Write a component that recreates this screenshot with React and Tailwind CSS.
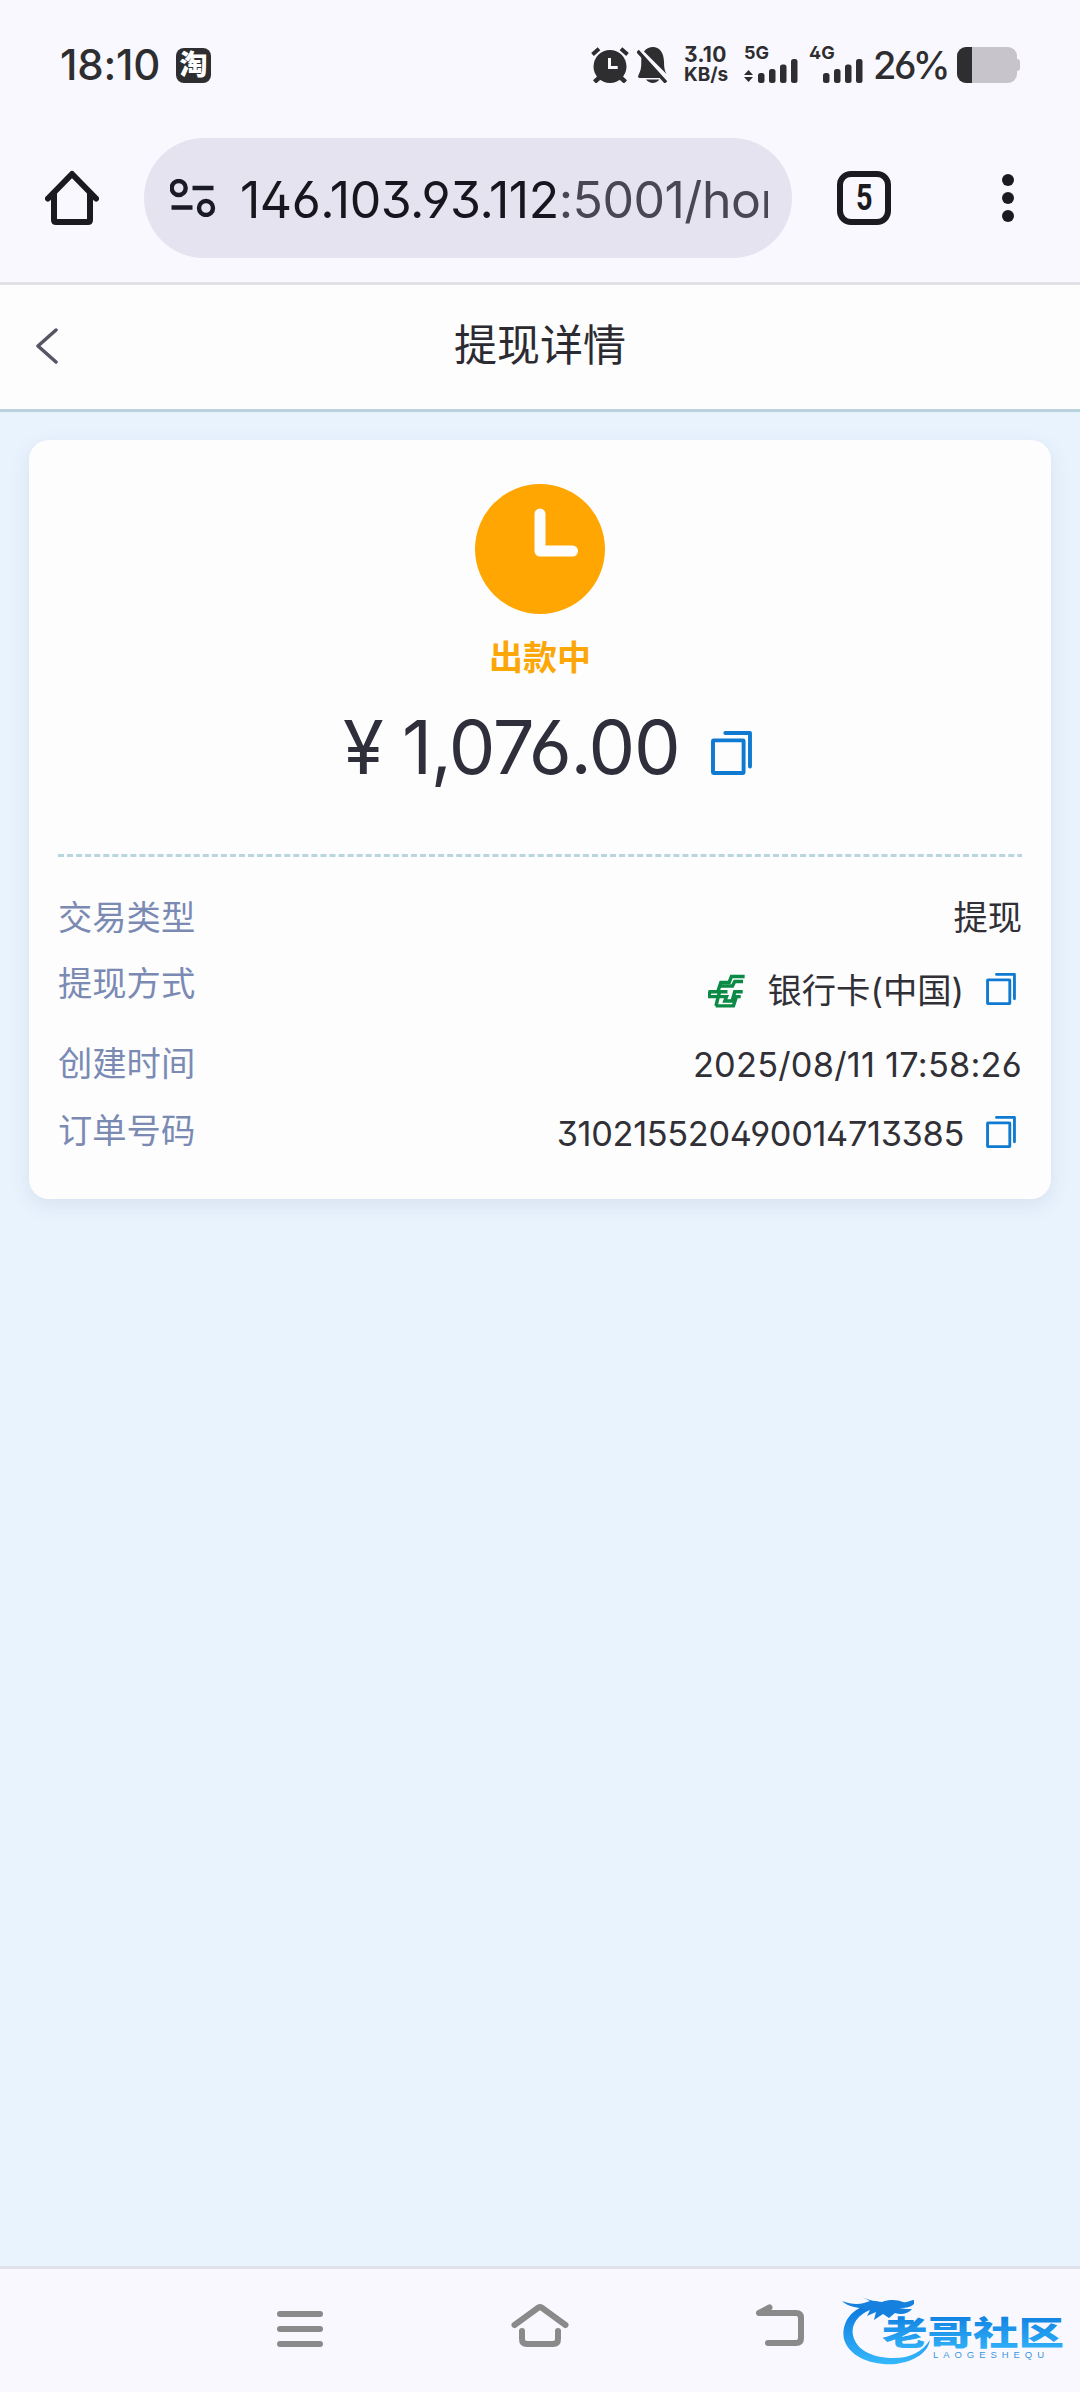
const fonts = "font-['Inter','Noto_Sans_CJK_SC',sans-serif] [font-feature-settings:'ss01']";

const SignalBars = () => (
  <svg className="block h-6 w-10" viewBox="0 0 40 24" fill="#2e2e30">
    <rect x="0" y="14" width="6.5" height="10" rx="2.5" />
    <rect x="11" y="10" width="6.5" height="14" rx="2.5" />
    <rect x="22" y="5.5" width="6.5" height="18.5" rx="2.5" />
    <rect x="33" y="0" width="6.5" height="24" rx="2.5" />
  </svg>
);

const AlarmIcon = () => (
  <svg className="h-9 w-[38px]" viewBox="0 0 38 36" fill="none">
    <path d="M1.5 7.5 8 1.8M36.5 7.5 30 1.8" stroke="#2e2e30" strokeWidth="4" />
    <path d="M9 30 3.5 35M29 30l5.5 5" stroke="#2e2e30" strokeWidth="4.5" />
    <circle cx="19" cy="19.5" r="16.5" fill="#2e2e30" />
    <path d="M18.5 11v9.5h8.2" stroke="#f9f8fe" strokeWidth="3" />
  </svg>
);

const BellOffIcon = () => (
  <svg className="h-9 w-8" viewBox="0 0 32 36" fill="#2e2e30">
    <path d="M16 0c-3 0-6.5 1-9 4.5L29.500 27c-2-3-2.500-7-2.500-12.500C26.800 5 22 0 16 0Z" />
    <path d="M4.500 9c-.6 7 .6 12-2.500 18-1.500 2.500-1.200 4 1 4h21.500Z" />
    <path d="M.5 4 29 35.500" stroke="#2e2e30" strokeWidth="3.4" />
    <path d="M9 32.500h13.500c-3.500 4.500-10 4.500-13.500 0Z" />
  </svg>
);

const CopyIcon = ({ className }) => (
  <svg className={className} viewBox="0 0 41 44" fill="none" stroke="#0e7ad1" strokeWidth="3.9" strokeLinejoin="round" strokeLinecap="round">
    <rect x="2" y="9.4" width="30.600" height="32.600" rx="0.5" />
    <path d="M14.300 2H39v33.500" />
  </svg>
);

const BankLogo = () => (
  <svg className="h-[35px] w-[37px]" viewBox="27 31 112 105" fill="none" stroke="#0b8a45" strokeWidth="10.500">
    <path d="M138 38H98l-7 18H66l-8 24" />
    <path d="M133 53H108l-7 14H66" />
    <path d="M86 84H33l-4 15h54l-5 13h22l8-28h24" />
    <path d="M126 99h-13l-9 28H50" />
    <path d="M62 84 51 127" />
  </svg>
);

const StatusBar = () => (
  <div className="flex h-[83px] items-end justify-between px-[60px] text-[#2e2e30]">
    <div className="flex h-9 items-center gap-4">
      <span className="w-[100px] whitespace-nowrap text-[42px] font-medium leading-9 tracking-[-0.2px]">18:10</span>
      <span className="flex size-[35px] items-center justify-center rounded-lg bg-[#2e2e30] text-[28px] font-black leading-none text-white">淘</span>
    </div>
    <div className="flex h-9 items-end">
      <AlarmIcon />
      <span className="ml-2 flex"><BellOffIcon /></span>
      <div className="ml-[15px] flex h-9 w-11 flex-col justify-between text-[21px] font-bold">
        <span className="h-4 leading-4 tracking-[0.3px]">3.10</span>
        <span className="h-4 text-[19px] leading-4">KB/s</span>
      </div>
      <div className="ml-4 flex h-9 w-[54px] flex-col">
        <span className="h-3 text-[18px] font-bold leading-3">5G</span>
        <div className="flex items-end justify-between">
          <svg className="mb-px h-3 w-[9px]" viewBox="0 0 9 12" fill="#2e2e30">
            <path d="M4.500 0 9 5H0ZM4.500 12 9 7H0Z" />
          </svg>
          <SignalBars />
        </div>
      </div>
      <div className="ml-[11px] flex h-9 w-[54px] flex-col">
        <span className="h-3 text-[18px] font-bold leading-3">4G</span>
        <div className="flex justify-end"><SignalBars /></div>
      </div>
      <span className="ml-[10px] w-[76px] whitespace-nowrap text-[38px] font-medium leading-9 tracking-[-2.4px]">26%</span>
      <div className="ml-2 flex h-9 items-center">
        <div className="h-9 w-[60px] overflow-hidden rounded-[9px] bg-[#c7c4cb]">
          <div className="h-full w-[15px] bg-[#2e2e30]" />
        </div>
        <div className="h-3 w-[3px] rounded-r-sm bg-[#c7c4cb]" />
      </div>
    </div>
  </div>
);

const BrowserBar = () => (
  <div className="mt-[55px] flex h-[120px] items-center">
    <svg className="ml-[45px] h-[56px] w-[54px] shrink-0" viewBox="0 0 54 56" fill="none" stroke="#1a1a20" strokeWidth="6" strokeLinecap="round" strokeLinejoin="round">
      <path d="M3 28.500 27 4l24 24.500" />
      <path d="M9 24v26q0 2 2 2h32q2 0 2-2V24" />
    </svg>
    <div className="ml-[45px] flex h-[120px] w-[648px] items-center rounded-full bg-[#e4e3ef]">
      <svg className="ml-[26px] h-[38px] w-[46px] shrink-0" viewBox="0 0 46 38" fill="none" stroke="#1a1a26" strokeWidth="4.4">
        <circle cx="8.700" cy="9" r="7" />
        <path d="M22.500 9h21M1.500 28.500h21" />
        <circle cx="36" cy="29" r="7" />
      </svg>
      <div className="ml-[24px] mt-[3px] w-[528px] overflow-hidden whitespace-nowrap text-[50px] leading-[68px] tracking-[-0.5px] text-[#484753]">
        <span className="text-[#17161f]">146.103.93.112</span>:5001/hom
      </div>
    </div>
    <div className="ml-[45px] flex size-[54px] items-center justify-center rounded-[14px] border-[6px] border-[#1a1a20] font-[Roboto] text-[36px] font-bold leading-none text-[#1a1a20]">
      <span className="scale-x-80">5</span>
    </div>
    <div className="ml-[111px] flex flex-col gap-1.5">
      <i className="size-3 rounded-full bg-[#1a1a20]" />
      <i className="size-3 rounded-full bg-[#1a1a20]" />
      <i className="size-3 rounded-full bg-[#1a1a20]" />
    </div>
  </div>
);

const Row = ({ label, className, children }) => (
  <div className={`flex justify-between ${className}`}>
    <span className="h-[50px] text-[#7b8ab3]">{label}</span>
    {children}
  </div>
);

const DetailCard = () => (
  <div className="mx-[29px] mt-7 flex h-[759px] flex-1 flex-col rounded-[20px] bg-[#fdfdfe] px-[29px] shadow-[0_6px_20px_rgba(60,80,120,0.1)]">
    <svg className="mx-auto mt-11 size-[130px] shrink-0" viewBox="0 0 130 130" fill="none">
      <circle cx="65" cy="65" r="65" fill="#ffa602" />
      <path d="M65 30v37h32.500" stroke="#fdfdfe" strokeWidth="11" strokeLinecap="round" strokeLinejoin="round" />
    </svg>
    <div className="mt-[19px] text-center text-[34px] font-bold leading-[50px] text-[#fca708]">出款中</div>
    <div className="ml-[285px] mt-[14px] flex h-[100px] items-center">
      <span className="w-[358px] whitespace-nowrap text-[74px] leading-[100px] tracking-[-1.3px] text-[#2f2f3b]">¥ 1,076.00</span>
      <CopyIcon className="ml-[10px] mt-[12px] h-11 w-[41px]" />
    </div>
    <svg className="mt-[57px] h-[3px] w-full shrink-0" viewBox="0 0 964 3">
      <path d="M0 1.500h964" stroke="#b9d5de" strokeWidth="3" strokeDasharray="6 3.050" />
    </svg>
    <div className="text-[34.3px] leading-[50px] text-[#303036]">
      <Row label="交易类型" className="mt-9">
        <span>提现</span>
      </Row>
      <Row label="提现方式" className="mt-4">
        <div className="mt-[7px] flex items-center pr-[6px]">
          <BankLogo />
          <span className="ml-[22px] mr-[22px]">银行卡(中国)</span>
          <CopyIcon className="-mt-[4px] h-8 w-[30px]" />
        </div>
      </Row>
      <Row label="创建时间" className="mt-[23px]">
        <span className="mt-px tracking-[0.25px]">2025/08/11 17:58:26</span>
      </Row>
      <Row label="订单号码" className="mt-4">
        <div className="flex items-center pr-[6px] pt-[3px]">
          <span className="mr-[22px] tracking-[-0.32px]">310215520490014713385</span>
          <CopyIcon className="-mt-[4px] h-8 w-[30px]" />
        </div>
      </Row>
    </div>
  </div>
);

const Watermark = () => (
  <svg className="absolute left-[835px] top-[16px] h-[90px] w-[240px]" viewBox="0 0 240 90">
    <defs>
      <linearGradient id="wm" x1="0" y1="0" x2="0" y2="1">
        <stop offset="0" stopColor="#0a76dc" />
        <stop offset="1" stopColor="#35b8fb" />
      </linearGradient>
    </defs>
    <path fill="url(#wm)" d="M38 19C16 22 6 38 9 54c5 18 28 27 52 25 20-3 32-12 34-24-8 12-20 18-36 18-20 0-38-7-41-23-2-12 6-23 26-28Z" />
    <path fill="#1580dd" d="M7 16c8 3 15 4 22 2l6-2-8-4c8 4 14 4 20 5 8-3 16-2 21 0 5 1 8-2 11-2v4c-4 4-10 4-15 4 5 1 9 1 13 1-4 5-11 6-17 4l-6 5-6-4-9 6 2-8-9 4 3-6C24 23 13 22 7 16Z" />
    <text x="47" y="60" fontSize="33" fill="url(#wm)" fontFamily="'Noto Sans CJK SC', sans-serif" fontWeight="900" textLength="182" lengthAdjust="spacingAndGlyphs">老哥社区</text>
    <text x="98" y="73" fontSize="9.5" fill="#3a96df" fontWeight="500" fontFamily="'Liberation Sans', sans-serif" textLength="111">LAOGESHEQU</text>
  </svg>
);

const NavBar = () => (
  <div className="relative flex h-[126px] border-t-[3px] border-[#e1e1e9] bg-[#f9f8fe]">
    <div className="ml-[277px] mt-[42px] flex flex-col gap-[9px]">
      <i className="h-1.5 w-[46px] rounded-full bg-[#8a8a8b]" />
      <i className="h-1.5 w-[46px] rounded-full bg-[#8a8a8b]" />
      <i className="h-1.5 w-[46px] rounded-full bg-[#8a8a8b]" />
    </div>
    <svg className="ml-[188px] mt-[34px] h-[44px] w-[58px]" viewBox="0 0 58 44" fill="none" stroke="#8a8a8b" strokeWidth="6" strokeLinecap="round" strokeLinejoin="round">
      <path d="M3.500 22 27.500 4.500q1.500-1 3 0L54.500 22" />
      <path d="M11 28v8q0 5 5 5h26q5 0 5-5v-8" />
    </svg>
    <svg className="ml-[187px] mt-[35px] h-[44px] w-[48px]" viewBox="0 0 48 44" fill="none" stroke="#8a8a8b" strokeWidth="6" strokeLinecap="round" strokeLinejoin="round">
      <path d="M13.500 3.500 3 9h37q5 0 5 5v20q0 5-5 5H12" />
    </svg>
    <Watermark />
  </div>
);

const App = () => (
  <div className={`flex h-[2392px] w-[1080px] flex-col overflow-hidden bg-[#f9f8fe] ${fonts}`}>
    <StatusBar />
    <BrowserBar />
    <div className="mt-6 flex h-[130px] shrink-0 items-center border-b-[3px] border-t-[3px] border-b-[#b9d3de] border-t-[#e1e0e6] bg-[#fdfdfe]">
      <svg className="-mt-[3px] ml-[35px] h-[36px] w-[23px]" viewBox="0 0 23 36" fill="none" stroke="#565563" strokeWidth="3.5" strokeLinecap="round" strokeLinejoin="round">
        <path d="M21 2 3 18l18 16" />
      </svg>
      <h1 className="-mt-[4px] flex-1 pr-[58px] text-center text-[43px] leading-none text-[#2b2b31]">提现详情</h1>
    </div>
    <div className="flex flex-1 items-start bg-[#e9f3fe]">
      <DetailCard />
    </div>
    <NavBar />
  </div>
);

export default App;
